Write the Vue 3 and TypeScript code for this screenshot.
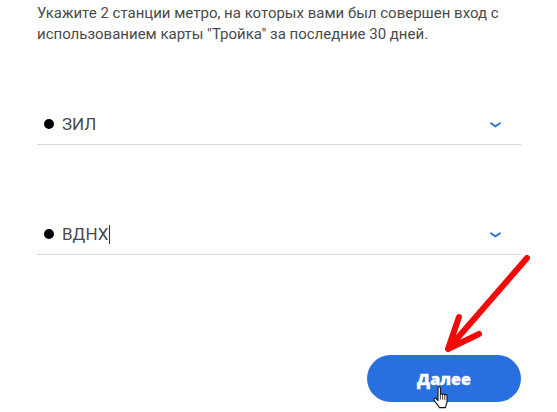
<script setup lang="ts">
const fields = [
  { value: 'ЗИЛ', caret: false },
  { value: 'ВДНХ', caret: true },
]
</script>

<template>
  <main class="page">
    <p class="intro">Укажите 2 станции метро, на которых вами был совершен вход с использованием карты "Тройка" за последние 30 дней.</p>
    <div class="fields">
      <div v-for="f in fields" :key="f.value" class="field">
        <span class="dot"></span>
        <span class="value">{{ f.value }}</span>
        <span v-if="f.caret" class="caret"></span>
        <svg class="chev" width="11" height="6" viewBox="0 0 11 6"><path d="M1 1.200 5.500 4.300 10 1.200" fill="none" stroke="#2f6fd8" stroke-width="1.800" stroke-linecap="round"/></svg>
      </div>
    </div>
    <div class="actions">
      <button class="next" type="button">Далее</button>
    </div>
    <svg class="arrow" width="100" height="110" viewBox="0 0 100 110">
      <path d="M87 6 L8 97 M8 97 L19 65 M8 97 L39 82" fill="none" stroke="#f70808" stroke-width="6" stroke-linecap="round" stroke-linejoin="round"/>
    </svg>
    <svg class="hand" width="18" height="23" viewBox="0 0 18 23">
      <path d="M5 2c0-1.600 2.400-1.600 2.400 0v6.500c0-1 2.200-1 2.200.2 0-1 2.200-1 2.200.3 0-.9 2.200-.8 2.200.6v6c0 2.800-1.200 4-1.600 6H6.400C5.600 19.400 1.600 16 1 13.800c-.4-1.500 1.200-2.300 2.200-1.200L5 14.500z" fill="#fff" stroke="#111" stroke-width="1.100" stroke-linejoin="round"/>
      <path d="M7.400 8.500v5M9.600 8.700v5M11.800 9v5" stroke="#111" stroke-width=".8" fill="none"/>
    </svg>
  </main>
</template>

<style scoped>
.page {
  position: relative;
  box-sizing: border-box;
  width: 557px;
  height: 412px;
  padding: 3px 36px 0 37px;
  overflow: hidden;
  background: #fff;
  font-family: Roboto, sans-serif;
  color: #4a4a4a;
}
.intro {
  margin: 0;
  font-size: 15px;
  line-height: 21px;
}
.fields {
  display: flex;
  flex-direction: column;
  gap: 69px;
  margin-top: 59px;
}
.field {
  display: flex;
  align-items: center;
  box-sizing: border-box;
  height: 41px;
  border-bottom: 1px solid #d9d9d9;
  padding: 0 20px 0 7px;
}
.dot {
  width: 10px;
  height: 10px;
  border-radius: 50%;
  background: #000;
  margin-right: 8px;
}
.value {
  font-size: 17px;
}
.caret {
  width: 1px;
  height: 19px;
  background: #333;
  margin-left: 1px;
}
.chev {
  margin-left: auto;
  margin-top: 2px;
}
.actions {
  display: flex;
  justify-content: flex-end;
  margin-top: 100px;
}
.next {
  width: 154px;
  height: 47px;
  border: 0;
  border-radius: 24px;
  background: #2a6fe0;
  color: #fff;
  font-family: "Open Sans", sans-serif;
  font-size: 16px;
  font-weight: 800;
  -webkit-text-stroke: 0.3px #fff;
}
.arrow {
  position: absolute;
  left: 440px;
  top: 252px;
}
.hand {
  position: absolute;
  left: 433px;
  top: 386px;
}
</style>
